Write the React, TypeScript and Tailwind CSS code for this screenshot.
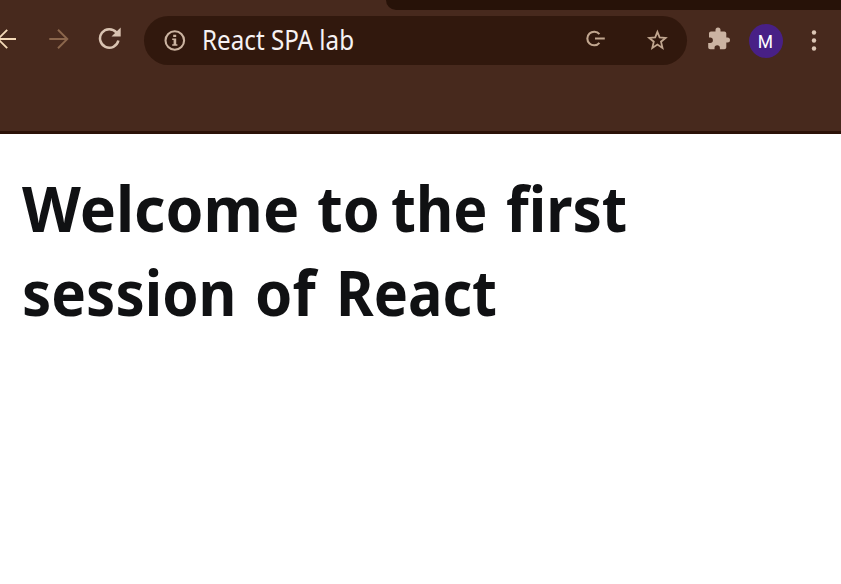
import React from "react";

function BackIcon() {
  return (
    <svg className="block h-6 w-6" viewBox="0 0 24 24" fill="none" stroke="#f4d9b8" strokeWidth="1.9">
      <path d="M23 12H5M14.2 2.8 5 12l9.2 9.2" />
    </svg>
  );
}

function ForwardIcon() {
  return (
    <svg className="block h-6 w-6" viewBox="0 0 24 24" fill="none" stroke="#8b664c" strokeWidth="1.9">
      <path d="M1.3 12h18.5M10 2.8l9.3 9.2-9.3 9.2" />
    </svg>
  );
}

function ReloadIcon() {
  return (
    <svg className="block h-6 w-6" viewBox="0 0 24 24">
      <path d="M18.4 5.4A9.3 9.3 0 1 0 20.4 13.5" fill="none" stroke="#d9c3b1" strokeWidth="2.5" />
      <path d="M22.7 .5v9h-9.2Z" fill="#d9c3b1" />
    </svg>
  );
}

function InfoIcon() {
  return (
    <svg className="block h-6 w-6" viewBox="0 0 24 24">
      <circle cx="11.8" cy="11.5" r="9.3" fill="none" stroke="#cbb3a0" strokeWidth="2.1" />
      <path d="M10.2 5.7h3v2.3h-3zM9.2 9.5h4v5.7h1.2v1.6H9.2v-1.6h1.4v-4.1H9.2z" fill="#cbb3a0" />
    </svg>
  );
}

function KeyIcon() {
  return (
    <svg className="block h-6 w-6" viewBox="0 0 24 24" fill="none" stroke="#c1a68f" strokeWidth="2.1">
      <path d="M16.4 7.2A6.8 6.8 0 1 0 16.4 15.8M12 11.5h9.8" />
    </svg>
  );
}

function StarIcon() {
  return (
    <svg className="block h-6 w-6" viewBox="0 0 24 24" fill="none" stroke="#c1a68f" strokeWidth="1.8">
      <path d="m12.4 2.9 2.2 5.5 6 .5-4.6 3.8 1.5 6.2-5.1-3.4-5.1 3.4 1.5-6.2-4.600-3.800 6-.5Z" />
    </svg>
  );
}

function PuzzleIcon() {
  return (
    <svg className="block h-6 w-6" viewBox="0 0 24 24" fill="#cbb3a2">
      <path d="M20.500 10.500H19.300V6.500c0-1.100-.9-2-2-2h-3.800V3a2.500 2.500 0 0 0-5 0v1.500H4c-1.100 0-2 .9-2 2v4h1.200a2.700 2.700 0 0 1 0 5.400H1.200V20.200c0 1.100.9 2 2 2h4.300v-1.300a2.700 2.700 0 0 1 5.400 0v1.300h4.400c1.100 0 2-.9 2-2v-4.700h1.200a2.500 2.500 0 0 0 0-5Z" />
    </svg>
  );
}

function MenuIcon() {
  return (
    <svg className="block h-6 w-6" viewBox="0 0 24 24" fill="#dcc6b5">
      <circle cx="12" cy="3.500" r="2.200" />
      <circle cx="12" cy="11.500" r="2.200" />
      <circle cx="12" cy="19.500" r="2.200" />
    </svg>
  );
}

export default function App() {
  return (
    <div className="h-[584px] w-[841px] overflow-hidden bg-white font-['Noto_Sans',sans-serif]">
      <header className="flex h-[134px] flex-col border-b-[3px] border-[#2b1208] bg-[#47291d]">
        <div className="ml-[386px] h-[10px] shrink-0 rounded-bl-[12px] bg-[#271208]" />
        <div className="mt-[6px] flex h-[49px] items-center">
          <div className="-ml-[7px] -mt-[3px]"><BackIcon /></div>
          <div className="-mt-[3px] ml-[31px]"><ForwardIcon /></div>
          <div className="-mt-[3px] ml-[26px]"><ReloadIcon /></div>
          <div className="ml-[22px] flex h-[49px] w-[543px] items-center rounded-full bg-[#31180d] pl-[19px]">
            <InfoIcon />
            <span className="-mt-[2px] ml-[15px] w-[381px] origin-left scale-x-[0.896] whitespace-nowrap text-[27px] leading-[36px] text-[#f6f2f3]">
              React SPA lab
            </span>
            <div className="-mt-[4px]"><KeyIcon /></div>
            <div className="ml-[38px]"><StarIcon /></div>
          </div>
          <div className="-mt-[3px] ml-[20px]"><PuzzleIcon /></div>
          <div className="ml-[18px] flex h-[34px] w-[34px] items-center justify-center rounded-full bg-[#482086] font-['Roboto',sans-serif] text-[19px] leading-none text-white">
            <span className="mt-[1px] -ml-[1px] scale-x-[0.92]">M</span>
          </div>
          <div className="ml-[19px]"><MenuIcon /></div>
        </div>
      </header>
      <main className="pl-[22px] pt-[32px]">
        <h1 className="whitespace-pre text-[63px] font-bold leading-[84px] text-[#101113] [font-variant-ligatures:none]">
          <span className="flex">
            <span className="w-[295px] origin-left scale-x-[0.966]">Welcome </span>
            <span className="w-[74px] origin-left scale-x-[0.94]">to </span>
            <span className="w-[115px] origin-left scale-x-[0.91]">the </span>
            <span className="w-[130px] origin-left scale-x-[0.93]">first</span>
          </span>
          <span className="flex">
            <span className="w-[233px] origin-left scale-x-[0.926]">session </span>
            <span className="w-[81px] origin-left scale-x-[0.95]">of </span>
            <span className="w-[180px] origin-left scale-x-[0.912]">React</span>
          </span>
        </h1>
      </main>
    </div>
  );
}
